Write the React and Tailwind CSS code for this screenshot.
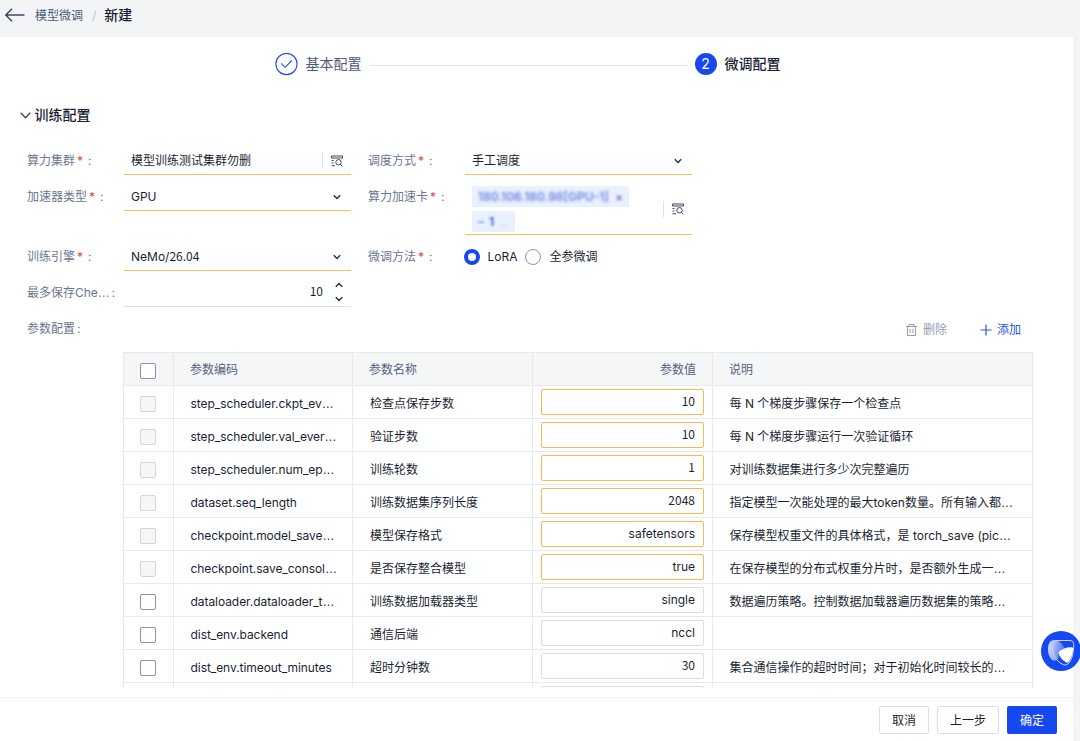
import { useState } from 'react';

const parameters = [
  { code: 'step_scheduler.ckpt_ev…', name: '检查点保存步数', value: '10', desc: '每 N 个梯度步骤保存一个检查点', required: true },
  { code: 'step_scheduler.val_ever…', name: '验证步数', value: '10', desc: '每 N 个梯度步骤运行一次验证循环', required: true },
  { code: 'step_scheduler.num_ep…', name: '训练轮数', value: '1', desc: '对训练数据集进行多少次完整遍历', required: true },
  { code: 'dataset.seq_length', name: '训练数据集序列长度', value: '2048', desc: '指定模型一次能处理的最大token数量。所有输入都…', required: true },
  { code: 'checkpoint.model_save…', name: '模型保存格式', value: 'safetensors', desc: '保存模型权重文件的具体格式，是 torch_save (pic…', required: true },
  { code: 'checkpoint.save_consol…', name: '是否保存整合模型', value: 'true', desc: '在保存模型的分布式权重分片时，是否额外生成一…', required: true },
  { code: 'dataloader.dataloader_t…', name: '训练数据加载器类型', value: 'single', desc: '数据遍历策略。控制数据加载器遍历数据集的策略…' },
  { code: 'dist_env.backend', name: '通信后端', value: 'nccl', desc: '' },
  { code: 'dist_env.timeout_minutes', name: '超时分钟数', value: '30', desc: '集合通信操作的超时时间；对于初始化时间较长的…' },
  { code: '', name: '', value: '', desc: '' },
];

// Digits use the CJK face, the ellipsis a full em, other Latin text stays in Inter
function Mixed({ text }) {
  return text.split(/(\d[\d.]*|…)/).map((part, i) => {
    if (part === '…') return <span key={i} className="font-['Liberation_Sans',sans-serif] tracking-normal">…</span>;
    if (/\d/.test(part)) return <span key={i} className="font-['Noto_Sans_CJK_SC',sans-serif]">{part}</span>;
    return part;
  });
}

function Label({ text, required }) {
  return (
    <div className="w-[96.5px] shrink-0 whitespace-nowrap text-[#6b7690]">
      <Mixed text={text} />
      {required && <span className="ml-[2px] text-[#d9473f]">*</span>}
      <span className={required ? 'ml-[5px]' : 'ml-[2px]'}>:</span>
    </div>
  );
}

function Chevron({ up }) {
  return (
    <svg width="8" height="6" viewBox="0 0 8 6" fill="none" stroke="#252b3a" strokeWidth="1.4" className={up ? 'rotate-180' : ''}>
      <path d="M.8 1.2 4 4.4l3.2-3.2" />
    </svg>
  );
}

function Lookup() {
  return (
    <div className="flex h-4 items-center border-l border-[#dfe1e6] pl-2">
      <svg width="12" height="12" viewBox="0 0 12 12" fill="none" stroke="#3d465c" strokeWidth="1">
        <path d="M.5 3V1h11v2M.5 3h11M.5 5.500h2M.5 8h2M.5 10.800h3.500" />
        <circle cx="7.5" cy="7.3" r="2.7" />
        <path d="m9.4 9.3 2.2 2.2" />
      </svg>
    </div>
  );
}

function Field({ label, tall, plain, children }) {
  return (
    <div className={`flex w-[324px] ${tall ? 'h-[52px]' : 'h-7'}`}>
      <div className="flex h-7 items-center"><Label text={label} required={!plain} /></div>
      <div className={`flex grow items-center justify-between border-b pl-[7.5px] pr-[10px] ${plain ? 'border-[#dfe1e6]' : 'border-[#f9c05c]'}`}>
        {children}
      </div>
    </div>
  );
}

function Radio({ label, checked, onClick }) {
  return (
    <button onClick={onClick} className="flex items-center gap-2">
      <span className={`h-4 w-4 rounded-full bg-white ${checked ? 'border-4 border-[#1648f0]' : 'border border-[#8b93ab]'}`} />
      {label}
    </button>
  );
}

function Checkbox({ disabled, checked, onClick }) {
  const look = disabled
    ? 'border-[#d3d6de] bg-[#f5f6f8]'
    : checked ? 'border-[#1648f0] bg-[#1648f0]' : 'border-[#8b93ab] bg-white';

  return (
    <button
      onClick={onClick}
      disabled={disabled}
      className={`mt-[3px] mr-px block h-4 w-4 rounded-[2px] border ${look}`}
    />
  );
}

function ParameterRow({ row, checked, onToggle }) {
  const numeric = /^\d+$/.test(row.value);

  return (
    <div className="grid h-[33px] shrink-0 grid-cols-[50px_179px_180px_180px_320px] border-b border-[#e8e9ed] whitespace-nowrap *:flex *:items-center *:border-r *:border-[#e8e9ed]">
      <div className="justify-center pt-px">
        <Checkbox disabled={row.required} checked={checked} onClick={onToggle} />
      </div>
      <div className="pt-[3px] pl-[16.5px]"><span className="tracking-[-0.06px]"><Mixed text={row.code} /></span></div>
      <div className="pt-[3px] pl-[17px]">{row.name}</div>
      <div className="px-2">
        <div className={`flex h-[26px] w-full items-center justify-end rounded-[2px] border pr-2 ${numeric ? 'pb-[2px]' : ''} ${row.required ? 'border-[#f5b951]' : 'border-[#dcdee4]'}`}>
          <span><Mixed text={row.value} /></span>
        </div>
      </div>
      <div className="pt-[3px] pl-[16.5px]"><span><Mixed text={row.desc} /></span></div>
    </div>
  );
}

function App() {
  const [method, setMethod] = useState('LoRA');
  const [copies, setCopies] = useState(10);
  const [selected, setSelected] = useState([]);

  const toggle = (code) => {
    setSelected(prev => (prev.includes(code) ? prev.filter(c => c !== code) : [...prev, code]));
  };

  return (
    <div className="relative flex h-[741px] w-[1080px] flex-col overflow-hidden bg-[#f3f4f6] font-['Inter','Noto_Sans_CJK_SC',sans-serif] text-xs leading-[18px] text-[#191f33]">
      <header className="flex h-[37px] shrink-0 items-start pl-[5px] pt-[6px]">
        <svg width="20" height="14" viewBox="0 0 20 14" fill="none" stroke="#3b4767" strokeWidth="1.4" className="mt-[2px]">
          <path d="M7 .8.8 7 7 13.2M.8 7h18.7" />
        </svg>
        <span className="ml-[10px] mt-px text-[#4d5a7c]">模型微调</span>
        <span className="ml-[9px] mt-px text-[#c2c6d0]">/</span>
        <span className="ml-2 text-sm leading-[18px] font-medium">新建</span>
      </header>

      <main className="flex h-[660px] w-[1073px] shrink-0 flex-col overflow-hidden bg-white pb-[9px]">
        <div className="flex h-[54px] shrink-0 items-center pl-[275px] text-sm">
          <svg width="23" height="23" viewBox="0 0 23 23" fill="none" stroke="#1f4df0" strokeWidth="1.1">
            <circle cx="11.5" cy="11" r="10.6" />
            <path d="m6.2 10.300 4 4 6.600-6.800" />
          </svg>
          <span className="ml-[7.500px] text-[#4d5a7c]">基本配置</span>
          <span className="ml-2 mt-[3px] h-px w-[317px] bg-[#dfe1e8]" />
          <span className="ml-2 flex h-[22px] w-[22px] items-center justify-center rounded-full bg-[#1648f0] text-white">2</span>
          <span className="ml-2 font-medium">微调配置</span>
        </div>

        <div className="flex h-12 shrink-0 items-center pl-[19.5px] text-sm font-medium">
          <svg width="11" height="7" viewBox="0 0 11 7" fill="none" stroke="#3b4767" strokeWidth="1.3">
            <path d="m.7.8 4.8 5 4.8-5" />
          </svg>
          <span className="ml-1">训练配置</span>
        </div>

        <div className="mt-2 grid shrink-0 grid-cols-[324px_324px] gap-x-[17px] gap-y-2 pl-[27px]">
          <Field label="算力集群">
            <span>模型训练测试集群勿删</span>
            <div className="-mr-0.5"><Lookup /></div>
          </Field>
          <Field label="调度方式">
            <span>手工调度</span>
            <Chevron />
          </Field>
          <Field label="加速器类型">
            <span>GPU</span>
            <Chevron />
          </Field>
          <Field label="算力加速卡" tall>
            <div className="flex flex-col items-start gap-1 pt-px text-[#4767d8]">
              <div className="flex h-[21px] w-[157px] items-center justify-between overflow-hidden bg-[#e9f0fe] px-[6px] whitespace-nowrap">
                <span className="font-semibold opacity-80 blur-[1.4px]">180.106.180.98[GPU-1]</span>
                <span className="font-semibold opacity-80 blur-[1px]">×</span>
              </div>
              <div className="flex h-[21px] w-[43px] items-center gap-[5px] bg-[#e9f0fe] pl-[6px]">
                <span className="font-bold opacity-70 blur-[1px]">–</span>
                <span className="font-bold blur-[1px]">1</span>
                <span className="opacity-30 blur-[1px]">…</span>
              </div>
            </div>
            <div className="-mr-0.5"><Lookup /></div>
          </Field>
          <Field label="训练引擎">
            <span><Mixed text="NeMo/26.04" /></span>
            <Chevron />
          </Field>
          <div className="flex h-7 items-center">
            <Label text="微调方法" required />
            <div className="-ml-px flex gap-2">
              <Radio label="LoRA" checked={method === 'LoRA'} onClick={() => setMethod('LoRA')} />
              <Radio label="全参微调" checked={method === 'full'} onClick={() => setMethod('full')} />
            </div>
          </div>
          <Field label="最多保存Che…" plain>
            <span />
            <div className="-mr-0.5 flex items-center gap-3">
              <span className="pb-[2px]"><Mixed text={String(copies)} /></span>
              <div className="flex flex-col gap-2 pb-px">
                <button onClick={() => setCopies(copies + 1)}><Chevron up /></button>
                <button onClick={() => setCopies(copies - 1)}><Chevron /></button>
              </div>
            </div>
          </Field>
        </div>

        <div className="mt-2 flex h-7 w-[1021px] shrink-0 items-center pl-[27px]">
          <Label text="参数配置" />
          <button className="ml-auto flex items-center gap-[6px] pt-px text-[#959db0]">
            <svg width="11" height="12" viewBox="0 0 11 12" fill="none" stroke="#959db0" strokeWidth="1">
              <path d="M0 2.500h11M3 2.500v-2h5v2M1.500 2.500v9h8v-9M4 4.800v4.400M7 4.800v4.400" />
            </svg>
            删除
          </button>
          <button className="ml-[33px] flex items-center gap-[5px] pt-px text-[#2754ee]">
            <svg width="12" height="12" viewBox="0 0 12 12" fill="none" stroke="#2754ee" strokeWidth="1.2">
              <path d="M6 .5v11M.5 6h11" />
            </svg>
            添加
          </button>
        </div>

        <div className="mt-[9px] ml-[123px] flex w-[910px] grow flex-col overflow-hidden border-t border-l border-[#e8e9ed]">
          <div className="grid h-[33px] shrink-0 grid-cols-[50px_179px_180px_180px_320px] border-b border-[#e8e9ed] bg-[#f5f6f8] text-[#56627f] *:flex *:items-center *:border-r *:border-[#e8e9ed]">
            <div className="justify-center"><Checkbox /></div>
            <div className="pt-[2px] pl-4">参数编码</div>
            <div className="pt-[2px] pl-4">参数名称</div>
            <div className="justify-end pt-[2px] pr-4">参数值</div>
            <div className="pt-[2px] pl-4">说明</div>
          </div>
          {parameters.map(row => (
            <ParameterRow key={row.code} row={row} checked={selected.includes(row.code)} onToggle={() => toggle(row.code)} />
          ))}
        </div>
      </main>

      <footer className="flex h-11 w-[1073px] shrink-0 items-center justify-end gap-2 border-t border-[#f0f1f4] bg-white pt-px pr-4">
        <button className="h-7 w-[50px] rounded-[2px] border border-[#dcdee4] pt-[2px]">取消</button>
        <button className="h-7 w-[62px] rounded-[2px] border border-[#dcdee4] pt-[2px]">上一步</button>
        <button className="h-7 w-[50px] rounded-[2px] bg-[#1648f0] pt-[2px] text-white">确定</button>
      </footer>

      {/* Assistant bubble */}
      <button className="absolute top-[631px] left-[1041px] h-10 w-10 rounded-full bg-[#1648f0]">
        <svg width="40" height="40" viewBox="0 0 40 40" fill="none">
          <defs>
            <linearGradient id="lens" x1="0" y1="0.4" x2="1" y2="0.6">
              <stop offset="0" stopColor="#fff" stopOpacity="0.8" />
              <stop offset="1" stopColor="#fff" stopOpacity="0.2" />
            </linearGradient>
          </defs>
          <path d="M13 9c5 0 9 4 11 9-3 1-6 2-6.500 4-.3 2 .5 4-.5 6-2 2-4 2-6 1-3-3-4-7-4-11 0-5 2-9 6-9Z" fill="url(#lens)" />
          <path d="M14.500 9.500H29c2.500 0 3.700 1.500 3.700 4 0 8-1.700 16-5.700 19.500-1.800 1.500-4 1.200-6 0-6-3.500-9.500-9-9.500-15 0-3.500.8-6.500 3-8.500Z" stroke="#c9d6ff" strokeWidth="1" />
          <path d="M17.300 21.500c3-3.500 8-5.500 13.500-5.300 1 0 1.400.8 1.300 1.800-.4 5-1.800 9.500-4.300 13-.8 1-2 1-3 .2-4-2.500-6.500-5.200-7.500-9.700Z" fill="#fff" />
        </svg>
      </button>
    </div>
  );
}

export default App;
